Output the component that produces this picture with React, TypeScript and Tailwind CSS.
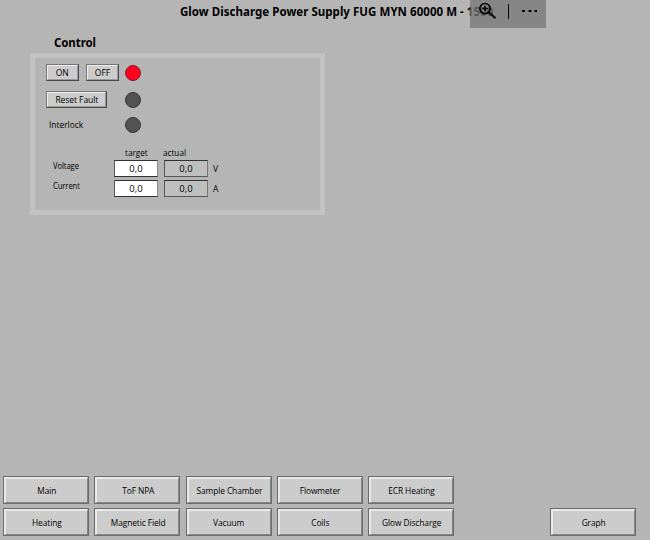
import type { ReactNode } from "react";

const navRows = [
  ["Main", "ToF NPA", "Sample Chamber", "Flowmeter", "ECR Heating"],
  ["Heating", "Magnetic Field", "Vacuum", "Coils", "Glow Discharge"],
];

function NavButton({ children }: { children: ReactNode }) {
  return (
    <button className="h-[28px] w-[86px] shrink-0 border border-[#6c6c6c] bg-[#cccccc] p-0 text-[9.5px] tracking-[-0.1px]">
      <span className="flex h-full w-full items-center justify-center whitespace-nowrap border-t-2 border-l-2 border-r border-b border-t-[#e9e9e9] border-l-[#e9e9e9] border-r-[#858585] border-b-[#858585] pt-px">
        <span className="scale-x-[0.88]">{children}</span>
      </span>
    </button>
  );
}

function SmallButton({ children, width }: { children: ReactNode; width: string }) {
  return (
    <button className={`h-[17px] shrink-0 border border-t-[#777] border-l-[#777] border-r-[#484848] border-b-[#484848] bg-[#cccccc] p-0 text-[9.5px] leading-[13px] tracking-[-0.1px] ${width}`}>
      <span className="flex h-full w-full items-center justify-center whitespace-nowrap border border-t-[#efefef] border-l-[#efefef] border-r-[#9a9a9a] border-b-[#9a9a9a]">
        <span className="scale-x-[0.9]">{children}</span>
      </span>
    </button>
  );
}

function Lamp({ on = false }: { on?: boolean }) {
  return (
    <span className={`block size-4 shrink-0 rounded-full border ${on ? "border-[#8b1824] bg-[#ff001e]" : "border-[#383838] bg-[#525252]"}`} />
  );
}

function ValueRow({ label, unit }: { label: string; unit: string }) {
  return (
    <div className="flex h-[17px] items-start">
      <span className="w-[61px] origin-left scale-x-[0.9] pt-px text-[8.5px] leading-[10px] tracking-[-0.1px]">{label}</span>
      <span className="flex h-[17px] w-[44px] items-center justify-center border border-t-[#303030] border-r-[#888] border-b-[#303030] border-l-[#555] bg-white pt-px text-[9.5px] leading-[14px]">0,0</span>
      <span className="ml-[6px] flex h-[17px] w-[44px] items-center justify-center border border-t-[#303030] border-r-[#777] border-b-[#555] border-l-[#555] bg-[#bfbfbf] pt-px text-[9.5px] leading-[14px]">0,0</span>
      <span className="ml-[5px] pt-[4px] text-[8.5px] leading-[10px]">{unit}</span>
    </div>
  );
}

export default function App() {
  return (
    <main className="relative flex h-[540px] w-[650px] flex-col overflow-hidden bg-[#b5b5b5] font-['Open_Sans','Noto_Sans',sans-serif] text-black">
      <h1 className="h-[35px] pt-[4px] pl-[180px] font-['Noto_Sans',sans-serif] text-[11.5px] leading-[16px] font-bold tracking-[0.04px] whitespace-nowrap">
        Glow Discharge Power Supply FUG MYN 60000 M - 1500
      </h1>

      <div className="absolute top-0 left-[470px] flex h-[28px] w-[76px] bg-[#777777]/75">
        <svg className="h-[28px] w-[76px]" viewBox="0 0 76 28" fill="none" stroke="#000">
          <circle cx="15" cy="8.6" r="5.1" strokeWidth="1.7" />
          <path d="M12.2 8.5h5.6M15 5.7v5.6" strokeWidth="1.5" />
          <path d="M18.8 12.3l6.7 6" strokeWidth="1.9" />
          <path d="M38.5 4v15" strokeWidth="1" />
          <path d="M52 11h3M58.5 11h3M64.5 11h2.5" strokeWidth="2" />
        </svg>
      </div>

      <h2 className="h-[18px] pl-[54px] font-['Noto_Sans',sans-serif] text-[11.5px] leading-[15px] font-bold tracking-[-0.1px]">Control</h2>
      <section className="ml-[30px] flex h-[162px] w-[295px] flex-col border-[5px] border-[#c2c2c2] pt-[6px] pl-[11px]">
        <div className="flex h-[17px] items-center">
          <SmallButton width="w-[33px]">ON</SmallButton>
          <div className="ml-[7px] flex"><SmallButton width="w-[33px]">OFF</SmallButton></div>
          <div className="ml-[5.5px]"><Lamp on /></div>
        </div>
        <div className="mt-[10px] flex h-[17px] items-center">
          <SmallButton width="w-[61px]">Reset Fault</SmallButton>
          <div className="ml-[17.5px]"><Lamp /></div>
        </div>
        <div className="mt-[9px] flex h-[16px] items-center">
          <span className="ml-[3px] w-[72px] origin-left scale-x-[0.88] text-[9.5px]">Interlock</span>
          <div className="ml-[3.5px]"><Lamp /></div>
        </div>
        <div className="mt-[13px] flex h-[14px] pl-[79px] text-[9.5px] leading-[13px]">
          <span className="w-[38px] origin-left scale-x-[0.86]">target</span>
          <span className="origin-left scale-x-[0.86]">actual</span>
        </div>
        <div className="flex flex-col gap-[3px] pl-[7px]">
          <ValueRow label="Voltage" unit="V" />
          <ValueRow label="Current" unit="A" />
        </div>
      </section>

      <footer className="mt-auto flex items-end justify-between pr-[14px] pb-[4px] pl-[3px]">
        <nav className="flex flex-col gap-[4px]">
          {navRows.map((row) => (
            <div key={row[0]} className="flex gap-[5.3px]">
              {row.map((name) => <NavButton key={name}>{name}</NavButton>)}
            </div>
          ))}
        </nav>
        <NavButton>Graph</NavButton>
      </footer>
    </main>
  );
}
